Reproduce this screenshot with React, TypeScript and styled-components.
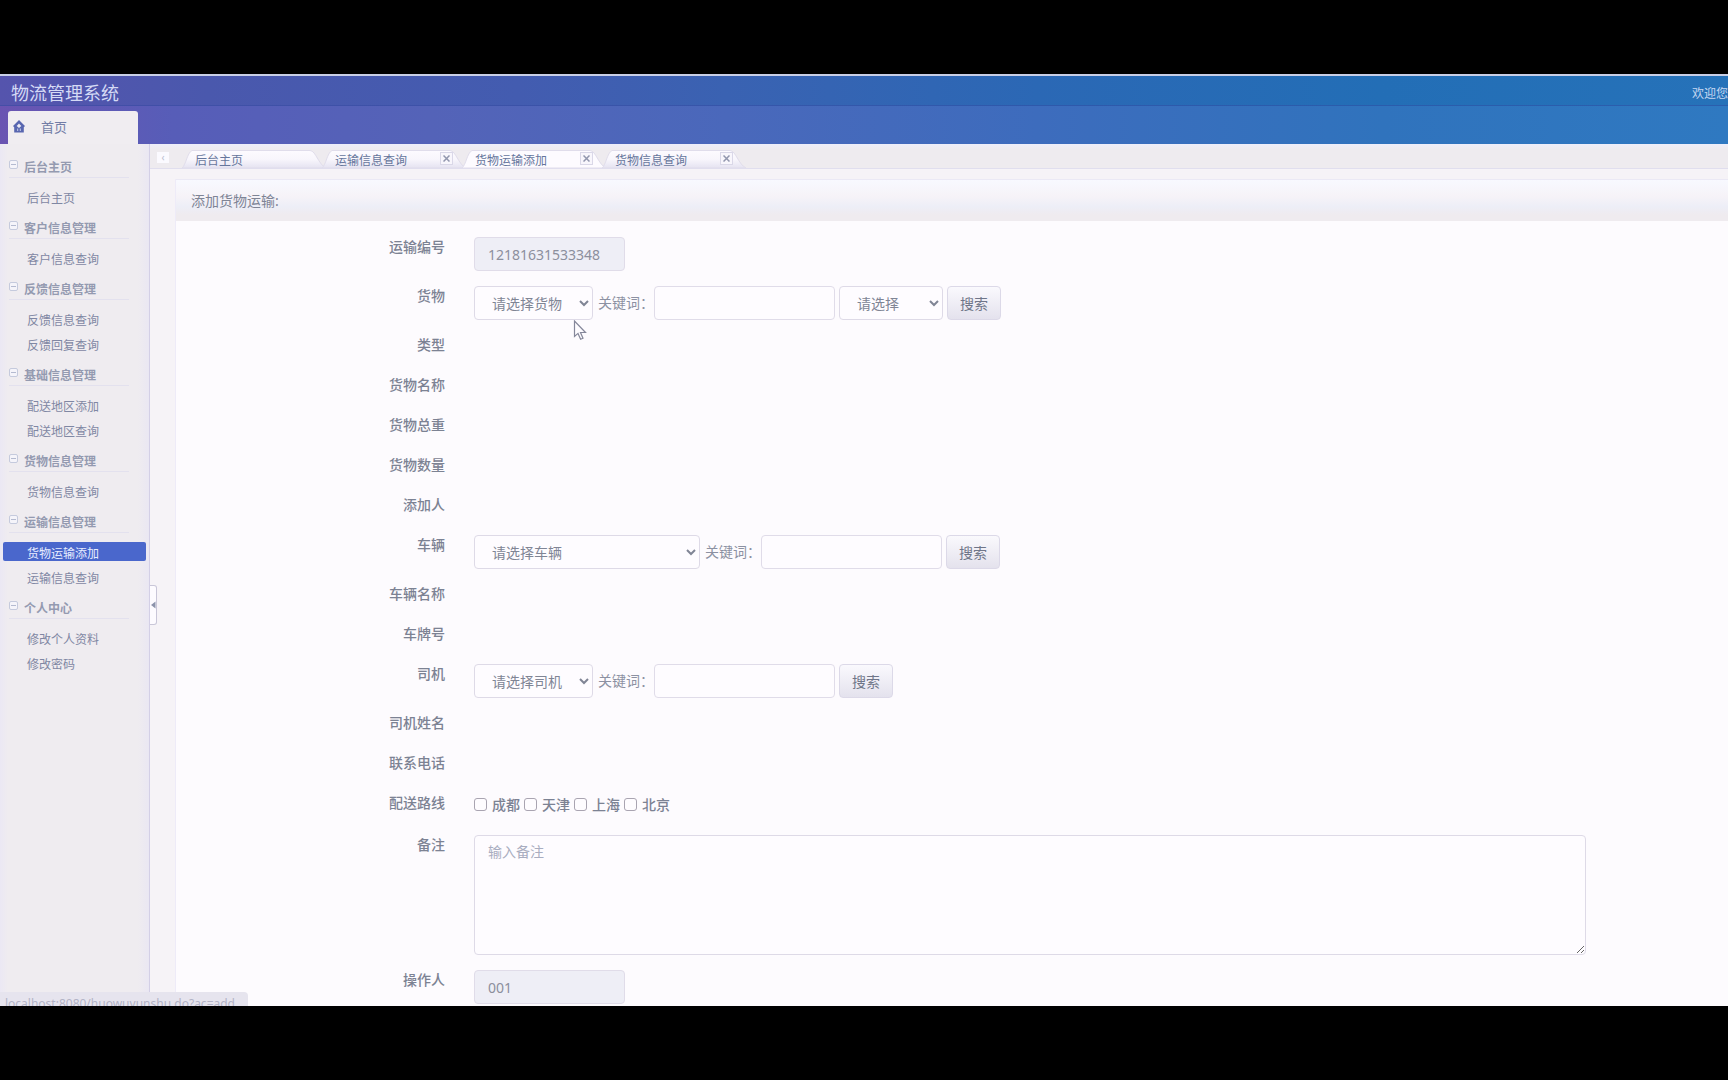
import React from 'react';
import styled, { createGlobalStyle } from 'styled-components';

const GlobalStyle = createGlobalStyle`
  * { box-sizing: border-box; }
  body {
    margin: 0;
    background: #000;
    font-family: "Noto Sans", "Noto Sans CJK SC", sans-serif;
    font-size: 14px;
    color: #7d8496;
  }
  input, select, textarea, button { font-family: inherit; font-size: 14px; }
`;

const Page = styled.div`
  display: flex;
  flex-direction: column;
  height: 100vh;
  padding: 74px 0;
  background: #000;
`;

const Screen = styled.div`
  position: relative;
  flex: 1;
  min-height: 0;
  display: flex;
  flex-direction: column;
  overflow: hidden;
  border-top: 2px solid #c9cfe6;
  background: #f6f3f7;
`;

const TopBar = styled.header`
  flex: none;
  display: flex;
  align-items: flex-end;
  justify-content: space-between;
  height: 30px;
  padding-left: 11px;
  background: linear-gradient(90deg, #5554ad 0%, #4a58ad 12%, #435cb0 30%, #3a62b2 42%, #2b68b5 60%, #236eb6 80%, #2672b9 100%);
  border-bottom: 1px solid rgba(50, 70, 160, 0.45);
`;

const Brand = styled.h1`
  margin: 0;
  font-size: 18px;
  line-height: 24px;
  font-weight: 400;
  color: #d5daf5;
`;

const Welcome = styled.span`
  flex: 0 0 35px;
  font-size: 12px;
  line-height: 22px;
  white-space: nowrap;
  color: #c5d8f2;
`;

const NavBar = styled.nav`
  flex: none;
  display: flex;
  align-items: flex-end;
  height: 38px;
  padding-left: 8px;
  background: linear-gradient(90deg, #6a54b2 0%, #575db8 10%, #5463b8 25%, #4a68bb 42%, #3d6cbd 60%, #3073bd 80%, #2f79c1 100%);
`;

const HomeTab = styled.a`
  display: flex;
  align-items: center;
  gap: 16px;
  width: 130px;
  height: 33px;
  padding: 0 0 2px 5px;
  border-radius: 3px 3px 0 0;
  background: #f0edf1;
  font-size: 13px;
  color: #727da6;
  text-decoration: none;
`;

const Body = styled.div`
  flex: 1;
  min-height: 0;
  display: flex;
`;

const Sidebar = styled.aside`
  flex: 0 0 150px;
  padding-top: 12px;
  background: linear-gradient(90deg, #ebe8f4 0, #efecf0 8px, #efecf0 138px, #eae7f3 149px);
  border-right: 1px solid #d3cfe6;
`;

const Group = styled.section`
  padding-bottom: 5px;
`;

const GroupTitle = styled.h2`
  display: flex;
  align-items: center;
  gap: 6px;
  height: 22px;
  margin: 0 20px 9px 9px;
  border-bottom: 1px solid #e3e1ee;
  font-size: 12px;
  font-weight: 700;
  color: #949ab0;
`;

const Toggle = styled.button`
  display: flex;
  align-items: center;
  justify-content: center;
  width: 9px;
  height: 9px;
  margin-bottom: 4px;
  padding: 0;
  border: 1px solid #c5cadd;
  border-radius: 2px;
  background: #f5f4fa;
  &::before { content: ""; width: 5px; height: 1px; background: #b4bad0; }
`;

const SideLink = styled.a<{ $active?: boolean }>`
  display: block;
  height: 19px;
  margin: 0 3px 6px 3px;
  padding-left: 24px;
  border-radius: 2px;
  font-size: 12px;
  line-height: 24px;
  text-decoration: none;
  color: ${p => (p.$active ? '#e8edff' : '#7f87a3')};
  background: ${p => (p.$active ? '#4a67cc' : 'transparent')};
`;

const Main = styled.main`
  position: relative;
  flex: 1;
  min-width: 0;
  display: flex;
  flex-direction: column;
`;

const TabStrip = styled.div`
  flex: none;
  display: flex;
  align-items: flex-end;
  height: 25px;
  border-bottom: 1px solid #e0deee;
  background: linear-gradient(#edeefa 0, #eeebef 5px, #eeebef 100%);
`;

const ScrollButton = styled.button`
  width: 12px;
  height: 11px;
  margin: 0 13px 5px 7px;
  padding: 0;
  border: 0;
  background: #fbfaff;
  color: #babdcf;
  font-size: 10px;
  line-height: 9px;
`;

const Tab = styled.div`
  display: grid;
  width: 149px;
  height: 18px;
  margin-right: -9px;
  > * { grid-area: 1 / 1; }
`;

const TabContent = styled.div`
  display: flex;
  align-items: flex-start;
  justify-content: space-between;
  padding: 0 18px 0 13px;
  font-size: 12px;
  line-height: 21px;
  color: #66769c;
  z-index: 1;
`;

const CloseButton = styled.button`
  display: flex;
  align-items: center;
  justify-content: center;
  width: 13px;
  height: 13px;
  margin-top: 2px;
  padding: 0;
  border: 1px solid #dad8e8;
  background: #f8f6fc;
  color: #9196ad;
`;

const Handle = styled.button`
  position: absolute;
  left: 0;
  top: 441px;
  display: flex;
  align-items: center;
  width: 7px;
  height: 40px;
  padding: 0;
  border: 1px solid #c9c6d8;
  border-left: 0;
  border-radius: 0 3px 3px 0;
  background: #fdfbff;
`;

const Panel = styled.section`
  flex: 1;
  min-height: 0;
  margin: 10px 0 0 25px;
  overflow: hidden;
  border-left: 1px solid #eeebf8;
  background: #fdfbfe;
`;

const PanelTitle = styled.h3`
  height: 42px;
  margin: 0;
  padding-left: 15px;
  border-top: 1px solid #ebe9f5;
  font-size: 14px;
  font-weight: 400;
  line-height: 42px;
  color: #7e8495;
  background: linear-gradient(#f8f9ff 0, #f6f3f8 40%, #edeef7 65%, #efebef 85%, #efebef 100%);
`;

const Form = styled.form`
  padding: 16px 142px 0 0;
`;

const Row = styled.div<{ $space?: number }>`
  display: grid;
  grid-template-columns: 269px minmax(0, 1fr);
  column-gap: 29px;
  align-items: start;
  margin-bottom: ${p => p.$space ?? 15}px;
`;

const FieldLabel = styled.label`
  font-size: 14px;
  font-weight: 500;
  line-height: 20px;
  text-align: right;
  color: #7c8293;
`;

const Controls = styled.div`
  display: flex;
  align-items: center;
`;

const Keyword = styled.label`
  padding-left: 5px;
  line-height: 34px;
  color: #8c91a2;
`;

const TextInput = styled.input<{ $width: number }>`
  width: ${p => p.$width}px;
  height: 34px;
  padding: 0 13px;
  border: 1px solid #e0dce9;
  border-radius: 4px;
  background: #fefcff;
  color: #8c8f9d;
  &:read-only { background: #eeeef6; }
`;

const Select = styled.select<{ $width: number; $gap?: boolean }>`
  width: ${p => p.$width}px;
  height: 34px;
  margin-left: ${p => (p.$gap ? 4 : 0)}px;
  padding: 0 1px 0 13px;
  border: 1px solid #dedae7;
  border-radius: 4px;
  background: #fefcff;
  color: #808595;
`;

const SearchButton = styled.button`
  width: 54px;
  height: 34px;
  margin-left: 4px;
  padding: 0;
  border: 1px solid #dcd9e8;
  border-radius: 4px;
  background: linear-gradient(#faf9fd, #e4e2ed);
  color: #6f7588;
`;

const Choices = styled.div`
  display: flex;
  gap: 4px;
`;

const Choice = styled.label`
  display: flex;
  align-items: center;
  gap: 5px;
  height: 22px;
  font-weight: 500;
  color: #7c8293;
`;

const Check = styled.input`
  appearance: none;
  width: 13px;
  height: 13px;
  margin: 0;
  border: 1px solid #a9a4b1;
  border-radius: 3px;
  background: #fefcff;
`;

const Notes = styled.textarea`
  display: block;
  width: 100%;
  height: 120px;
  padding: 6px 13px;
  border: 1px solid #dedae7;
  border-radius: 4px;
  background: #fefcff;
  line-height: 20px;
  color: #8c91a2;
  &::placeholder { color: #a9adc0; }
`;

const StatusBubble = styled.div`
  position: absolute;
  left: 0;
  bottom: -7px;
  height: 21px;
  padding: 0 13px 0 5px;
  border-radius: 0 4px 0 0;
  background: #e6e4ee;
  font-size: 12px;
  line-height: 23px;
  color: #b2b3c6;
`;

const Pointer = styled.svg`
  position: absolute;
  left: 573px;
  top: 244px;
`;

const HomeIcon = () => (
  <svg width="12" height="13" viewBox="0 0 12 13" aria-hidden="true">
    <path d="M6 0 12 6 10.8 7.2V12.5H1.2V7.2L0 6Z" fill="#5866b0" />
    <path d="M6 3.6 8.3 6 6 8 3.7 6Z" fill="#eceaf4" />
    <path d="M4.2 8.4H5.2V11H4.2ZM6.8 8.4H7.8V11H6.8Z" fill="#c8cdea" />
  </svg>
);

const menu = [
  { title: '后台主页', items: ['后台主页'] },
  { title: '客户信息管理', items: ['客户信息查询'] },
  { title: '反馈信息管理', items: ['反馈信息查询', '反馈回复查询'] },
  { title: '基础信息管理', items: ['配送地区添加', '配送地区查询'] },
  { title: '货物信息管理', items: ['货物信息查询'] },
  { title: '运输信息管理', items: ['货物运输添加', '运输信息查询'] },
  { title: '个人中心', items: ['修改个人资料', '修改密码'] },
];

const tabs = [
  { title: '后台主页', closable: false },
  { title: '运输信息查询', closable: true },
  { title: '货物运输添加', closable: true, active: true },
  { title: '货物信息查询', closable: true },
];

const TabShape = ({ active }: { active?: boolean }) => (
  <svg width="149" height="18" viewBox="0 0 149 18" aria-hidden="true">
    <defs>
      <linearGradient id="tabFill" x1="0" y1="0" x2="0" y2="1">
        <stop offset="0" stopColor="#fdfbff" />
        <stop offset="0.5" stopColor="#f8f6fc" />
        <stop offset="1" stopColor="#e5e3f1" />
      </linearGradient>
    </defs>
    <path
      d="M0 18C4 15 5 3 10 0.5H128C134 1 136 14 144 18Z"
      fill={active ? '#fdfbff' : 'url(#tabFill)'}
      stroke="#e0ddeb"
      strokeWidth="1"
    />
  </svg>
);

const EmptyRow = ({ name }: { name: string }) => (
  <Row $space={20}>
    <FieldLabel as="span">{name}</FieldLabel>
  </Row>
);

export default function App() {
  return (
    <>
      <GlobalStyle />
      <Page>
        <Screen>
          <TopBar>
            <Brand>物流管理系统</Brand>
            <Welcome>欢迎您</Welcome>
          </TopBar>
          <NavBar>
            <HomeTab href="#home"><HomeIcon />首页</HomeTab>
          </NavBar>
          <Body>
            <Sidebar>
              {menu.map(group => (
                <Group key={group.title}>
                  <GroupTitle>
                    <Toggle type="button" aria-label={group.title} />
                    {group.title}
                  </GroupTitle>
                  {group.items.map(item => (
                    <SideLink key={item} href="#page" $active={item === '货物运输添加'}>{item}</SideLink>
                  ))}
                </Group>
              ))}
            </Sidebar>
            <Main>
              <TabStrip>
                <ScrollButton type="button">‹</ScrollButton>
                {tabs.map(tab => (
                  <Tab key={tab.title}>
                    <TabShape active={tab.active} />
                    <TabContent>
                      {tab.title}
                      {tab.closable && (
                        <CloseButton type="button" aria-label="关闭">
                          <svg width="7" height="7" viewBox="0 0 7 7" aria-hidden="true">
                            <path d="M0.5 0.5 6.5 6.5M6.5 0.5 0.5 6.5" stroke="currentColor" strokeWidth="1.5" />
                          </svg>
                        </CloseButton>
                      )}
                    </TabContent>
                  </Tab>
                ))}
              </TabStrip>
              <Handle type="button" aria-label="收起">
                <svg width="6" height="8" viewBox="0 0 6 8" aria-hidden="true">
                  <path d="M5.5 0.5V7.5L1 4Z" fill="#8c93ab" />
                </svg>
              </Handle>
              <Panel>
                <PanelTitle>添加货物运输:</PanelTitle>
                <Form>
                  <Row>
                    <FieldLabel htmlFor="code">运输编号</FieldLabel>
                    <Controls><TextInput id="code" $width={151} readOnly value="12181631533348" /></Controls>
                  </Row>
                  <Row>
                    <FieldLabel htmlFor="cargo">货物</FieldLabel>
                    <Controls>
                      <Select id="cargo" $width={119}><option>请选择货物</option></Select>
                      <Keyword htmlFor="cargoKey">关键词：</Keyword>
                      <TextInput id="cargoKey" $width={181} />
                      <Select aria-label="类型" $width={104} $gap><option>请选择</option></Select>
                      <SearchButton type="button">搜索</SearchButton>
                    </Controls>
                  </Row>
                  <EmptyRow name="类型" />
                  <EmptyRow name="货物名称" />
                  <EmptyRow name="货物总重" />
                  <EmptyRow name="货物数量" />
                  <EmptyRow name="添加人" />
                  <Row>
                    <FieldLabel htmlFor="car">车辆</FieldLabel>
                    <Controls>
                      <Select id="car" $width={226}><option>请选择车辆</option></Select>
                      <Keyword htmlFor="carKey">关键词：</Keyword>
                      <TextInput id="carKey" $width={181} />
                      <SearchButton type="button">搜索</SearchButton>
                    </Controls>
                  </Row>
                  <EmptyRow name="车辆名称" />
                  <EmptyRow name="车牌号" />
                  <Row>
                    <FieldLabel htmlFor="driver">司机</FieldLabel>
                    <Controls>
                      <Select id="driver" $width={119}><option>请选择司机</option></Select>
                      <Keyword htmlFor="driverKey">关键词：</Keyword>
                      <TextInput id="driverKey" $width={181} />
                      <SearchButton type="button">搜索</SearchButton>
                    </Controls>
                  </Row>
                  <EmptyRow name="司机姓名" />
                  <EmptyRow name="联系电话" />
                  <Row $space={20}>
                    <FieldLabel as="span">配送路线</FieldLabel>
                    <Choices>
                      {['成都', '天津', '上海', '北京'].map(city => (
                        <Choice key={city}><Check type="checkbox" />{city}</Choice>
                      ))}
                    </Choices>
                  </Row>
                  <Row>
                    <FieldLabel htmlFor="notes">备注</FieldLabel>
                    <Notes id="notes" placeholder="输入备注" />
                  </Row>
                  <Row>
                    <FieldLabel htmlFor="operator">操作人</FieldLabel>
                    <Controls><TextInput id="operator" $width={151} readOnly value="001" /></Controls>
                  </Row>
                </Form>
              </Panel>
            </Main>
          </Body>
          <StatusBubble>localhost:8080/huowuyunshu.do?ac=add</StatusBubble>
          <Pointer width="14" height="21" viewBox="0 0 14 21" aria-hidden="true">
            <path d="M1.5 1V16.5L5 13.4 7.6 19.3 10 18.2 7.5 12.5H12.5Z" fill="#fefcff" stroke="#85879a" strokeWidth="1.2" />
          </Pointer>
        </Screen>
      </Page>
    </>
  );
}
